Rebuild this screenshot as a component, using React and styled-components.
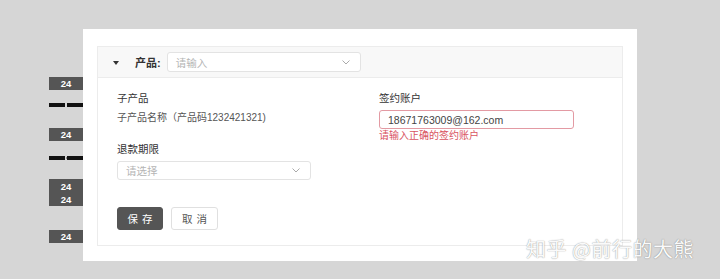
import React from 'react';
import styled, { createGlobalStyle } from 'styled-components';

const GlobalStyle = createGlobalStyle`
  html, body {
    margin: 0;
    padding: 0;
    background: #d6d6d6;
    font-family: "Liberation Sans", "Noto Sans CJK SC", sans-serif;
  }
`;

const Page = styled.div`
  position: relative;
  width: 720px;
  height: 279px;
  overflow: hidden;
  display: flex;
  align-items: flex-start;
  padding-top: 29px;
  box-sizing: border-box;
`;

const Gutter = styled.div`
  width: 34px;
  margin-left: 49px;
  padding-top: 48px;
  display: flex;
  flex-direction: column;
`;

const Badge = styled.div`
  background: #555;
  color: #fff;
  font-size: 9.5px;
  font-weight: bold;
  line-height: 13px;
  height: ${p => p.lines * 13 + (p.lines - 1) * 1}px;
  margin-top: ${p => p.top || 0}px;
  display: flex;
  flex-direction: column;
  align-items: center;
  justify-content: center;
`;

const Dashes = styled.div`
  display: flex;
  justify-content: space-between;
  align-items: center;
  height: 4px;
  margin-top: ${p => p.top}px;
  span {
    width: 16px;
    height: 4px;
    background: #111;
  }
  i {
    width: 1px;
    height: 2px;
    background: #888;
  }
`;

const Card = styled.div`
  width: 554px;
  height: 232px;
  background: #fff;
  padding: 17px 14px;
  box-sizing: border-box;
`;

const Panel = styled.div`
  height: 198px;
  border: 1px solid #ececec;
  display: flex;
  flex-direction: column;
`;

const Header = styled.div`
  height: 30px;
  background: #f8f8f8;
  border-bottom: 1px solid #ececec;
  display: flex;
  align-items: center;
  padding-left: 15px;
`;

const Caret = styled.span`
  width: 0;
  height: 0;
  border-left: 3px solid transparent;
  border-right: 3px solid transparent;
  border-top: 4px solid #333;
  margin-top: 1px;
`;

const HeaderLabel = styled.span`
  margin-left: 16px;
  font-size: 11px;
  font-weight: bold;
  color: #333;
`;

const SelectBox = styled.div`
  width: ${p => p.w}px;
  height: ${p => p.h}px;
  margin-left: ${p => p.ml || 0}px;
  margin-top: ${p => p.mt || 0}px;
  border: 1px solid #e3e3e3;
  border-radius: 3px;
  background: #fff;
  box-sizing: border-box;
  display: flex;
  align-items: center;
  justify-content: space-between;
  padding: 0 10px 0 8px;
  font-size: 10.5px;
  color: #b5b5b5;
`;

const Body = styled.div`
  display: grid;
  grid-template-columns: 262px 195px;
  padding: 12px 19px 0;
`;

const Column = styled.div`
  display: flex;
  flex-direction: column;
`;

const Label = styled.div`
  font-size: 10.5px;
  line-height: 16px;
  color: #333;
  margin-top: ${p => p.top || 0}px;
`;

const Value = styled.div`
  font-size: 10px;
  line-height: 16px;
  color: #555;
  margin-top: 4px;
`;

const TextInput = styled.div`
  height: 19px;
  margin-top: 4px;
  border: 1px solid #e39aa3;
  border-radius: 3px;
  box-sizing: border-box;
  padding-left: 8px;
  display: flex;
  align-items: center;
  font-size: 10.5px;
  color: #444;
`;

const ErrorText = styled.div`
  font-size: 10px;
  line-height: 14px;
  color: #d9535f;
`;

const Actions = styled.div`
  grid-column: 1 / -1;
  display: flex;
  gap: 8px;
  margin-top: 27px;
`;

const Button = styled.div`
  width: ${p => p.w}px;
  height: 23px;
  box-sizing: border-box;
  border-radius: 3px;
  display: flex;
  align-items: center;
  justify-content: center;
  font-size: 10.5px;
  letter-spacing: 4px;
  padding-left: 4px;
  background: ${p => (p.primary ? '#555' : '#fff')};
  color: ${p => (p.primary ? '#fff' : '#555')};
  border: 1px solid ${p => (p.primary ? '#555' : '#e0e0e0')};
`;

const Watermark = styled.div`
  position: absolute;
  left: 526px;
  top: 237px;
  font-size: 20px;
  line-height: 24px;
  letter-spacing: 0.5px;
  color: #fafafa;
  text-shadow: 0 0 1px rgba(0, 0, 0, 0.4), 0 0 2px rgba(0, 0, 0, 0.12);
  font-family: "Noto Sans CJK SC", sans-serif;
`;

const Chevron = () => (
  <svg width="8" height="5" viewBox="0 0 8 5">
    <path d="M0.5 0.5 L4 4 L7.5 0.5" fill="none" stroke="#aaa" strokeWidth="1" />
  </svg>
);

const App = () => {
  return (
    <>
      <GlobalStyle />
      <Page>
        <Gutter>
          <Badge lines={1}>24</Badge>
          <Dashes top={13}><span /><span /></Dashes>
          <Badge lines={1} top={21}>24</Badge>
          <Dashes top={15}><span /><i /><span /></Dashes>
          <Badge lines={2} top={19}><span>24</span><span>24</span></Badge>
          <Badge lines={1} top={24}>24</Badge>
        </Gutter>
        <Card>
          <Panel>
            <Header>
              <Caret />
              <HeaderLabel>产品:</HeaderLabel>
              <SelectBox w={194} h={20} ml={6}>
                <span>请输入</span>
                <Chevron />
              </SelectBox>
            </Header>
            <Body>
              <Column>
                <Label>子产品</Label>
                <Value>子产品名称（产品码1232421321)</Value>
                <Label top={15}>退款期限</Label>
                <SelectBox w={194} h={19} mt={4}>
                  <span>请选择</span>
                  <Chevron />
                </SelectBox>
              </Column>
              <Column>
                <Label>签约账户</Label>
                <TextInput>18671763009@162.com</TextInput>
                <ErrorText>请输入正确的签约账户</ErrorText>
              </Column>
              <Actions>
                <Button primary w={46}>保存</Button>
                <Button w={47}>取消</Button>
              </Actions>
            </Body>
          </Panel>
        </Card>
        <Watermark>知乎 @前行的大熊</Watermark>
      </Page>
    </>
  );
};

export default App;
